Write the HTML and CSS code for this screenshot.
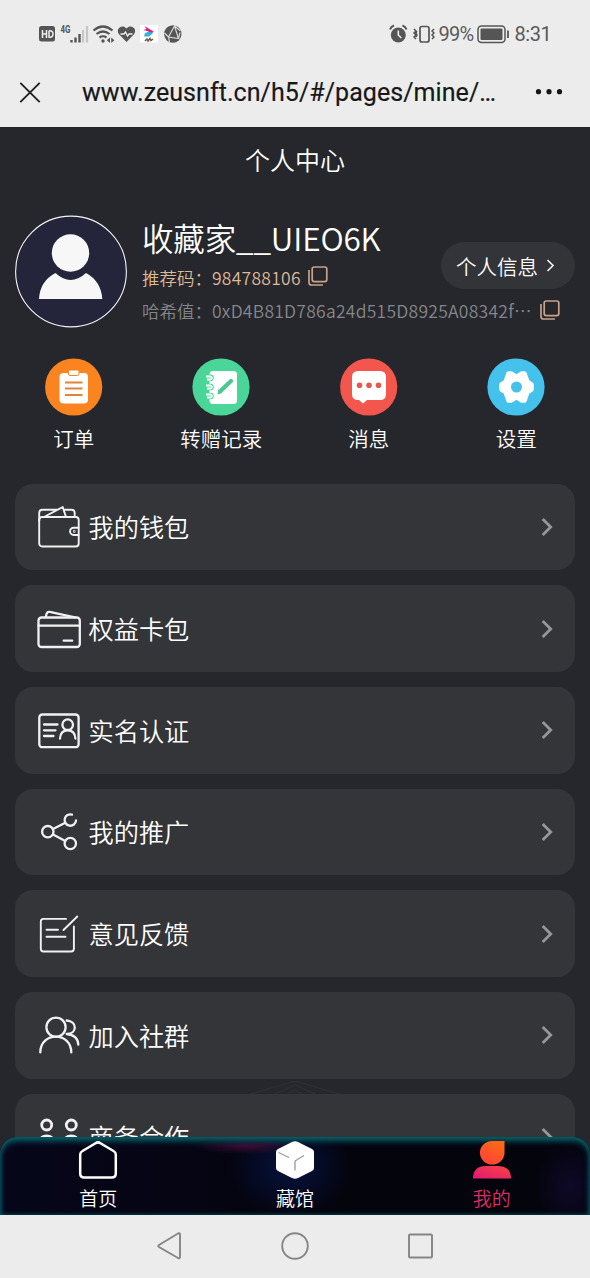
FILE: index.html
```html
<!DOCTYPE html>
<html lang="zh-CN">
<head>
<meta charset="utf-8">
<title>个人中心</title>
<link rel="stylesheet" href="styles.css">
</head>
<body>
<div class="phone">
  <header class="chrome">
    <div class="status">
      <div class="status-left">
        <svg width="125" height="22" viewBox="0 0 125 22">
          <rect x="1" y="3" width="16" height="15.500" rx="2.500" fill="#555"/>
          <path d="M4.500 7v8M8.500 7v8M4.500 11h4M11 7.800v6.400q4 .5 4-3.200t-4-3.200" fill="none" stroke="#eee" stroke-width="1.500"/>
          <text class="net" x="22.500" y="9.500" textLength="10" lengthAdjust="spacingAndGlyphs">4G</text>
          <path d="M33.500 17v2.500M37.500 14.500v5M41.500 11v8.500" stroke="#555" stroke-width="2.400"/>
          <path d="M45 7v12.500M49 3v16.500" stroke="#c6c6c6" stroke-width="2.200"/>
          <g fill="none" stroke="#555" stroke-width="2.200"><path d="M55.500 7.500q9.500-8 19 0M58.500 11q6.500-5 13 0M61.500 14.500q3.500-2.500 7 0"/></g>
          <circle cx="65" cy="18" r="1.700" fill="#555"/>
          <path d="M72 14.500v5.500l-3.200-2.700zM73.200 14.500v5.500l3.200-2.700z" fill="#555"/>
          <path d="M88.500 19 81 11.300C77 5.500 84.500.5 88.500 5.600 92.500.5 100 5.500 96 11.300z" fill="#555"/>
          <path d="M82.500 11H86l1.500-2 2 4 1.500-2h3.500" fill="none" stroke="#eee" stroke-width="1.300"/>
          <rect x="102" y="2" width="18" height="17.500" rx="1" fill="#fff"/>
          <path d="M106.500 3 115.500 8.500l-3 3.500-2-3.500-5-1.500 3-1z" fill="#d9227b"/><path d="m106 13.500 1-3.500 3-1 5.500.5-4.500 4z" fill="#2cb4e0"/>
          <path d="m107 18 2-2 1 2 2-2.500 1 2 2-1.500" fill="none" stroke="#6d5746" stroke-width="1.500"/>
        </svg>
        <svg width="20" height="22" viewBox="0 0 20 22"><circle cx="9.800" cy="11" r="8.700" fill="#555"/><path d="M11.500 3 5.500 14l10 1.500zM5.500 14 1.500 10M5.500 14l1 5M15.500 15.500l1.500-6M11.500 3l6 5" fill="none" stroke="#d8d8d8" stroke-width="1.200"/></svg>
      </div>
      <div class="status-right">
        <svg width="46" height="22" viewBox="0 0 46 22">
          <circle cx="9.300" cy="12" r="7.500" fill="#555"/><path d="M9.300 7.500V12l3 3" stroke="#eee" stroke-width="1.600" fill="none"/>
          <path d="M1 6.500q1-3 4-4M13.500 2.500q3 1 4 4" fill="none" stroke="#555" stroke-width="2"/>
          <rect x="31" y="3.500" width="9" height="15.500" rx="2" fill="none" stroke="#555" stroke-width="1.700"/>
          <path d="m25 6 2 2-2 2 2 2-2 2 2 2M28 8l-1 2 1 2-1 2M45 6l-2 2 2 2-2 2 2 2-2 2" fill="none" stroke="#555" stroke-width="1.500"/>
        </svg>
        <span class="percent">99%</span>
        <svg width="33" height="22" viewBox="0 0 33 22"><rect x="1" y="3" width="27" height="16.500" rx="3.500" fill="none" stroke="#555" stroke-width="1.500"/><rect x="3.500" y="5.500" width="22" height="11.500" rx="1" fill="#555"/><path d="M31 7.500v7.500" stroke="#555" stroke-width="1.800"/></svg>
        <span class="clock">8:31</span>
      </div>
    </div>
    <div class="address">
      <svg class="close" width="22" height="22" viewBox="0 0 22 22"><path d="m1.300.8 19.400 19.400m0-19.400L1.300 20.200" stroke="#222" stroke-width="1.900"/></svg>
      <span class="url">www.zeusnft.cn/h5/#/pages/mine/…</span>
      <svg class="more" width="28" height="8" viewBox="0 0 28 8"><g fill="#161616"><circle cx="3.500" cy="2.700" r="2.600"/><circle cx="14" cy="2.700" r="2.600"/><circle cx="24.500" cy="2.700" r="2.600"/></g></svg>
    </div>
  </header>

  <main class="page">
    <svg class="backdrop" width="150" height="24" viewBox="0 0 150 24"><path d="M0 22 75 0l75 22M30 24 75 4l45 20M55 20 75 9l20 11"/></svg>
    <h1 class="title">个人中心</h1>
    <section class="profile">
      <svg class="avatar" width="112" height="113" viewBox="0 0 112 113"><circle cx="56" cy="56.500" r="55.400" fill="#24253a" stroke="#f4f4f8" stroke-width="1.100"/><circle cx="55.500" cy="38" r="18.700" fill="#f7f7f7"/><path d="M24 84q1-18 16.500-26 15 14 30.500 0Q86 66 87.300 84z" fill="#f7f7f7"/></svg>
      <div class="who">
        <div class="name">收藏家__UIEO6K</div>
        <div class="code"><span class="code-text">推荐码：<span class="value">984788106</span></span><svg class="copy" width="20" height="20" viewBox="0 0 20 20"><rect x="4.200" y="1" width="14.600" height="14.600" rx="2"/><path d="M1 4v12.500Q1 19 3.500 19H15"/></svg></div>
        <div class="hash"><span class="hash-text">哈希值：<span class="value">0xD4B81D786a24d515D8925A08342f⋯</span></span><svg class="copy" width="20" height="20" viewBox="0 0 20 20"><rect x="4.200" y="1" width="14.600" height="14.600" rx="2"/><path d="M1 4v12.500Q1 19 3.500 19H15"/></svg></div>
      </div>
      <div class="info"><span>个人信息</span><svg width="9" height="14" viewBox="0 0 9 14"><path d="m1.500 1 5.500 5.500L1.500 12" fill="none" stroke="#eee" stroke-width="1.700"/></svg></div>
    </section>

    <nav class="shortcuts">
      <div class="shortcut"><svg width="58" height="58" viewBox="0 0 58 58"><circle cx="28.700" cy="29" r="28.600" fill="#fa8420"/><rect x="14.500" y="15" width="28.500" height="30.500" rx="4" fill="#fff"/><rect x="23.500" y="12" width="10.500" height="5.500" rx="1.500" fill="#fff" stroke="#fa8420"/><path d="M20 24.500h17.500M20 30.500h17.500M20 37h17.500" stroke="#e38334" stroke-width="2.200"/></svg><span>订单</span></div>
      <div class="shortcut"><svg width="58" height="58" viewBox="0 0 58 58"><circle cx="29" cy="29" r="28.600" fill="#4bd699"/><rect x="17.500" y="13" width="27.500" height="33" rx="3.500" fill="#fff"/><g fill="none"><path d="M14 19.800h4.500M14 29h4.500M14 38h4.500" stroke="#4bd699" stroke-width="6.500" stroke-linecap="round"/><path d="M14 18.500h4.500q3 1.500 0 3h-3.500M14 27.500h4.500q3 1.500 0 3h-3.500M14 36.500h4.500q3 1.500 0 3h-3.500" stroke="#fff" stroke-width="1.800"/><path d="m29 32.500 10-9.500" stroke="#4bc78f" stroke-width="4.200" stroke-linecap="round"/></g><path d="m25.500 36.500 1-5.500 4 4z" fill="#4bc78f"/></svg><span>转赠记录</span></div>
      <div class="shortcut"><svg width="58" height="58" viewBox="0 0 58 58"><circle cx="28.700" cy="29" r="28.600" fill="#f3564d"/><path d="M18 13h22q6 0 6 6v17q0 6-6 6H27l-4 3.500-4-3.500h-1q-6 0-6-6V19q0-6 6-6z" fill="#fff"/><g fill="#e5574f"><circle cx="19.500" cy="27.300" r="2.800"/><circle cx="29" cy="27.300" r="2.800"/><circle cx="38.500" cy="27.300" r="2.800"/></g></svg><span>消息</span></div>
      <div class="shortcut"><svg width="58" height="58" viewBox="0 0 58 58"><circle cx="29" cy="29" r="28.600" fill="#45c2ec"/><path d="M21.500 15.500h2.500l5.500 3.500 5.500-3.500h2.500l3 8.500 4 2.500v5l-4 2.500-3 8.500H35l-5.500-3.500-5.500 3.500h-2.500l-3-8.500-4-2.500v-5l4-2.500z" fill="#fff" stroke="#fff" stroke-width="4.500" stroke-linejoin="round"/><circle cx="29.500" cy="29" r="5.500" fill="#45c2ec"/></svg><span>设置</span></div>
    </nav>

    <section class="menu">
      <div class="row"><svg class="ico thin" viewBox="0 0 44 44"><rect x="2.200" y="12" width="39.500" height="29.500" rx="3"/><path d="M2.200 16V8q0-3.300 3.300-3.300h15M8 11.500 25.700 2 29 12M28 4.700h6.500q3.200 0 3.200 3.300v4"/><path d="M41.500 22.700h-4.800a3.600 3.600 0 0 0 0 7.300h4.800"/><circle cx="37.200" cy="26.400" r=".4"/></svg><span>我的钱包</span><svg class="chev" viewBox="0 0 12 20"><path d="m1.700 2 8 8-8 8"/></svg></div>
      <div class="row"><svg class="ico" viewBox="0 0 44 44"><rect x="1.500" y="10.500" width="41.300" height="29.500" rx="3"/><path d="M1.500 18.700h41.300M26.700 33.700h8.500M8.700 10l1-3.500q.8-2 3-1.600L38 10.300"/></svg><span>权益卡包</span><svg class="chev" viewBox="0 0 12 20"><path d="m1.700 2 8 8-8 8"/></svg></div>
      <div class="row"><svg class="ico" viewBox="0 0 44 44"><rect x="2.300" y="6.500" width="39.300" height="32.700" rx="3"/><path d="M7 16.500h13.500M7 22.300h11.500M7 28h9.500"/><circle cx="30.700" cy="16.700" r="5.300"/><path d="M23 30.500q.5-8.200 7.700-8.200t7.700 8.200"/></svg><span>实名认证</span><svg class="chev" viewBox="0 0 12 20"><path d="m1.700 2 8 8-8 8"/></svg></div>
      <div class="row"><svg class="ico" viewBox="0 0 44 44"><circle cx="10.800" cy="21.700" r="5.700"/><circle cx="33.300" cy="33.500" r="5.700"/><path d="M35 4.600a5.700 5.700 0 1 0 4 5.900M16 19l12.300-6.300M16 24.500l12.300 6.400"/></svg><span>我的推广</span><svg class="chev" viewBox="0 0 12 20"><path d="m1.700 2 8 8-8 8"/></svg></div>
      <div class="row"><svg class="ico thin" viewBox="0 0 44 44"><path d="M29 6.900H6.500q-2.700 0-2.700 2.700v27.200q0 2.700 2.700 2.700h27.700q2.700 0 2.700-2.700V14.500M26.500 18 40.300 4.500M9.500 17.800H21M9.500 24.700h19"/></svg><span>意见反馈</span><svg class="chev" viewBox="0 0 12 20"><path d="m1.700 2 8 8-8 8"/></svg></div>
      <div class="row"><svg class="ico" viewBox="0 0 44 44"><circle cx="19" cy="14.200" r="9.600"/><path d="M3.300 39.400c0-21 31-21 31 0M29.700 7.500c10.800 1 10.800 13 0 13.500 7.500.5 11.600 5 11.600 10.700"/></svg><span>加入社群</span><svg class="chev" viewBox="0 0 12 20"><path d="m1.700 2 8 8-8 8"/></svg></div>
      <div class="row"><svg class="ico bold" viewBox="0 0 44 44"><circle cx="9.700" cy="10" r="5"/><circle cx="34.300" cy="10" r="5"/><path d="M3.500 27q0-6 6.200-6t6.200 6M28 27q0-6 6.200-6t6.200 6"/></svg><span>商务合作</span><svg class="chev" viewBox="0 0 12 20"><path d="m1.700 2 8 8-8 8"/></svg></div>
    </section>

    <nav class="tabs">
      <div class="tab"><svg width="40" height="40" viewBox="0 0 40 40"><path d="M17.500 3.300q2.500-1.800 5 0L35.500 11q2.300 1.200 2.300 3.500v19q0 4-4 4H6.200q-4 0-4-4v-19q0-2.300 2.300-3.500z" fill="none" stroke="#fff" stroke-width="2.500"/></svg><span>首页</span></div>
      <div class="tab"><svg width="40" height="40" viewBox="0 0 40 40"><path d="M17 2q3-1.500 6 0l14 7q2 1 2 3v16q0 2-2 3l-14 7q-3 1.500-6 0L3 31q-2-1-2-3V12q0-2 2-3z" fill="#fff"/><path d="m3.500 12.500 10.500 5M20 30.500V21l9-5.500" fill="none" stroke="#999" stroke-width="1.300"/></svg><span>藏馆</span></div>
      <div class="tab active"><svg width="40" height="40" viewBox="0 0 40 40"><defs><linearGradient id="flame" x1=".8" y1="0" x2=".2" y2="1"><stop offset="0" stop-color="#ff6a14"/><stop offset="1" stop-color="#fb4139"/></linearGradient><linearGradient id="torso" x1="1" y1="0" x2="0" y2="1"><stop offset="0" stop-color="#fb4440"/><stop offset="1" stop-color="#e01776"/></linearGradient></defs><path d="M20 1h12.500v12A12.300 11.800 0 1 1 20 1z" fill="url(#flame)"/><path d="M1 38.500Q1 26 14 26h12q13 0 13 12.500z" fill="url(#torso)"/></svg><span>我的</span></div>
    </nav>
  </main>

  <footer class="softkeys">
    <svg width="28" height="30" viewBox="0 0 28 30"><path d="M3 14q-1.500 1 0 2l19 11q2 .8 2-1.200V3.700q0-2-2-1.200z"/></svg>
    <svg width="28" height="30" viewBox="0 0 28 30"><circle cx="14" cy="15" r="12.800"/></svg>
    <svg width="28" height="30" viewBox="0 0 28 30"><rect x="2" y="3.500" width="23" height="23" rx="1"/></svg>
  </footer>
</div>
</body>
</html>
```
FILE: styles.css
```css
* { box-sizing: border-box; }
body {
  margin: 0;
  font-family: "Noto Sans CJK SC", sans-serif;
  font-weight: 350;
  color: #fff;
}
svg { display: block; flex: none; }
.phone {
  width: 590px;
  height: 1278px;
  display: flex;
  flex-direction: column;
  overflow: hidden;
  background: #26272c;
}
.chrome {
  height: 127px;
  background: #ececec;
  font-family: Roboto, sans-serif;
  font-weight: 400;
}
.status {
  height: 66px;
  padding: 1px 39.500px 0 38px;
  display: flex;
  align-items: center;
  justify-content: space-between;
  color: #5a5a5a;
  font-size: 20px;
}
.status-left, .status-right { display: flex; align-items: center; }
.net { font: 700 11px Roboto, sans-serif; fill: #555; }
.percent { width: 35px; margin: 0 3px 0 4px; white-space: nowrap; letter-spacing: -.7px; }
.clock { width: 36px; margin-left: 5px; white-space: nowrap; letter-spacing: -.4px; }
.address {
  height: 53px;
  padding: 0 27px 0 19px;
  display: flex;
  align-items: center;
}
.url {
  margin-left: 41px;
  width: 453px;
  font-size: 25px;
  letter-spacing: .06px;
  -webkit-text-stroke: .2px #181818;
  white-space: nowrap;
  color: #181818;
}
.page {
  position: relative;
  height: 1088px;
  overflow: hidden;
}
.backdrop {
  position: absolute;
  left: 220px;
  top: 954px;
  fill: none;
  stroke: #303136;
}
.title {
  margin: 0;
  height: 68px;
  line-height: 65px;
  text-align: center;
  font-size: 25px;
  font-weight: 350;
}
.profile {
  position: relative;
  display: flex;
  height: 134px;
  padding: 20px 15px 0;
}
.who { margin: 0 0 0 15px; white-space: nowrap; }
.name { height: 47px; line-height: 44px; font-size: 31.500px; letter-spacing: -.15px; }
.code, .hash { display: flex; align-items: center; font-size: 17.500px; }
.value { letter-spacing: .26px; }
.code { height: 30px; color: #deb998; }
.code-text { width: 158px; }
.hash { height: 37px; color: #85868b; }
.hash-text { width: 390px; }
.copy {
  margin-left: 8px;
  margin-bottom: 2px;
  fill: none;
  stroke: #c7a288;
  stroke-width: 1.700;
}
.info {
  position: absolute;
  top: 47px;
  right: 15px;
  width: 134px;
  height: 47px;
  padding-left: 15px;
  border-radius: 24px;
  background: #333438;
  display: flex;
  align-items: center;
  gap: 8px;
  font-size: 20.500px;
}
.shortcuts {
  display: grid;
  grid-template-columns: repeat(4, 147.500px);
  height: 154.500px;
  padding-top: 29px;
}
.shortcut {
  display: flex;
  flex-direction: column;
  align-items: center;
  font-size: 20.500px;
  line-height: 30px;
  gap: 7px;
}
.menu {
  position: relative;
  padding: 0 15px;
  display: flex;
  flex-direction: column;
  gap: 15px;
}
.row {
  flex: none;
  height: 86.700px;
  padding: 0 22px;
  border-radius: 18px;
  background: #343539;
  display: flex;
  align-items: center;
  font-size: 25.200px;
}
.row span { flex: 1; padding: 0 0 1px 7.500px; }
.ico {
  width: 44px;
  height: 44px;
  fill: none;
  stroke: #f1f1f4;
  stroke-width: 2.300;
  stroke-linecap: round;
  stroke-linejoin: round;
}
.thin { stroke-width: 1.900; }
.bold { stroke-width: 2.800; }
.chev {
  width: 12px;
  height: 20px;
  fill: none;
  stroke: #96979b;
  stroke-width: 2.800;
}
.tabs {
  position: absolute;
  left: 0;
  right: 0;
  bottom: 0;
  height: 78px;
  padding-top: 3px;
  display: grid;
  grid-template-columns: repeat(3, 1fr);
  border-radius: 17px 17px 0 0;
  background:
    radial-gradient(ellipse 55px 8px at 247px 9px, #3a0b33, transparent),
    radial-gradient(ellipse 60px 50px at 290px 30px, #05133f, transparent),
    radial-gradient(ellipse 35px 45px at 570px 50px, #0e0928, transparent),
    linear-gradient(90deg, #06061a, #04040d 60%);
  box-shadow: inset 0 4px 6px #06606a, inset 0 0 4px #065763;
}
.tab {
  display: flex;
  flex-direction: column;
  align-items: center;
  font-size: 19px;
  line-height: 28px;
  gap: 4px;
}
.active { color: #df2b62; }
.softkeys {
  height: 63px;
  padding-bottom: 1px;
  display: flex;
  justify-content: center;
  align-items: center;
  gap: 97.500px;
  background: #ececec;
}
.softkeys svg { fill: none; stroke: #858585; stroke-width: 1.900; }
```
